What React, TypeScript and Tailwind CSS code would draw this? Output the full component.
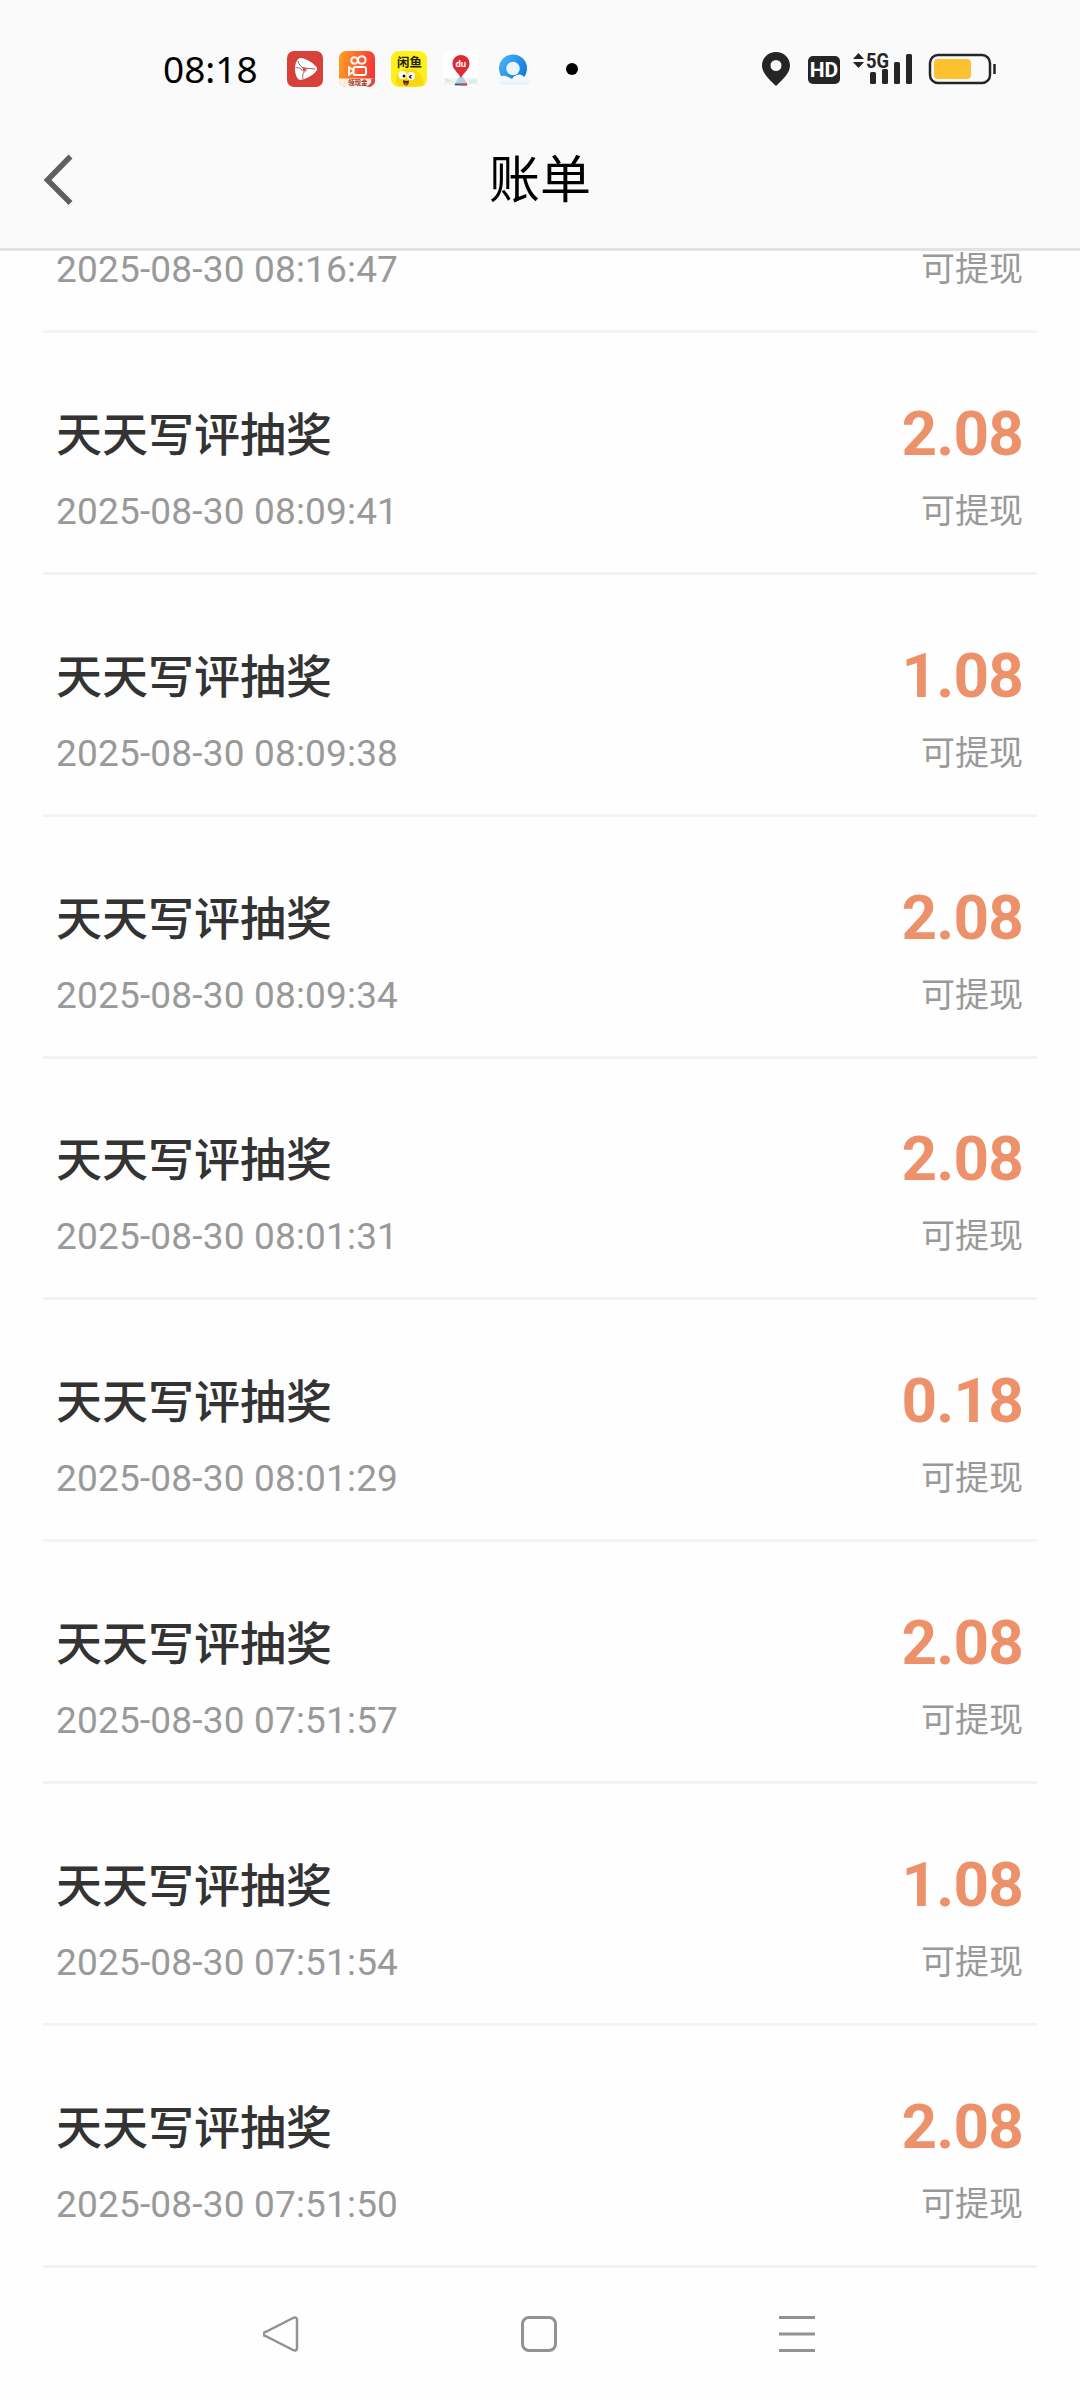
// src/App.tsx
// Bill list screen: status bar, title bar, transaction records and system nav.

import React from "react";

interface BillRecord {
  title: string;
  time: string;
  amount: string;
  status: string;
}

const TITLE = "天天写评抽奖";
const STATUS = "可提现";

const records: BillRecord[] = [
  { title: TITLE, time: "2025-08-30 08:16:47", amount: "2.08", status: STATUS },
  { title: TITLE, time: "2025-08-30 08:09:41", amount: "2.08", status: STATUS },
  { title: TITLE, time: "2025-08-30 08:09:38", amount: "1.08", status: STATUS },
  { title: TITLE, time: "2025-08-30 08:09:34", amount: "2.08", status: STATUS },
  { title: TITLE, time: "2025-08-30 08:01:31", amount: "2.08", status: STATUS },
  { title: TITLE, time: "2025-08-30 08:01:29", amount: "0.18", status: STATUS },
  { title: TITLE, time: "2025-08-30 07:51:57", amount: "2.08", status: STATUS },
  { title: TITLE, time: "2025-08-30 07:51:54", amount: "1.08", status: STATUS },
  { title: TITLE, time: "2025-08-30 07:51:50", amount: "2.08", status: STATUS },
];

const App: React.FC = () => (
  <div className="flex h-[2400px] w-[1080px] flex-col overflow-hidden bg-[#fefefe] font-['Roboto','Noto_Sans_CJK_SC',sans-serif]">
    <header className="h-[251px] shrink-0 border-b-3 border-[#e2e2e2] bg-[#fafafa]">
      <StatusBar />
      <TitleBar />
    </header>

    {/* ── Records, scrolled to the end ── */}
    <main className="flex h-[2017px] shrink-0 flex-col justify-end overflow-hidden px-[43px]">
      {records.map((r) => (
        <BillRow key={r.time} record={r} />
      ))}
    </main>

    <SystemNav />
  </div>
);

// ── Single record ─────────────────────────────────────────────────────────────
const BillRow: React.FC<{ record: BillRecord }> = ({ record }) => (
  <div className="flex h-[241.9px] shrink-0 items-end justify-between border-b-3 border-[#f3f3f3] pr-[14px] pb-[38px] pl-[13px]">
    <div className="flex flex-col">
      <p className="mb-[25px] text-[46px] leading-[60px] font-medium text-[#333]">{record.title}</p>
      <p className="text-[37px] leading-[44px] tracking-[0.18px] text-[#999]">{record.time}</p>
    </div>
    <div className="flex flex-col items-end pb-[1px]">
      <p className="mb-[25px] text-[62px] leading-[60px] font-bold tracking-[-0.8px] text-[#ed916a]">{record.amount}</p>
      <p className="text-[34px] leading-[44px] text-[#999]">{record.status}</p>
    </div>
  </div>
);

// ── Title bar ─────────────────────────────────────────────────────────────────
const TitleBar: React.FC = () => (
  <div className="grid h-[143px] grid-cols-3 items-center">
    <svg className="ml-[41px] h-[54px] w-[36px]" viewBox="0 0 36 54" fill="none" stroke="#5f5f5f" strokeWidth="5.5">
      <path d="M29.5 3.5 6.5 27l23 23" />
    </svg>
    <h1 className="pt-[2px] text-center text-[51px] leading-[60px] text-black">账单</h1>
  </div>
);

// ── Android status bar ────────────────────────────────────────────────────────
const StatusBar: React.FC = () => (
  <div className="flex h-[108px] items-center justify-between pt-[30px] pr-[84px] pl-[163px]">
    <div className="flex items-center">
      <span className="w-[124px] font-['Noto_Sans',sans-serif] text-[37px] leading-[40px] text-black">08:18</span>
      <div className="flex items-center gap-[16px]">
        <PlayAppIcon />
        <CameraAppIcon />
        <FishAppIcon />
        <MapAppIcon />
        <CloudAppIcon />
      </div>
      <span className="ml-[35px] size-[12px] rounded-full bg-black" />
    </div>
    <div className="flex items-center">
      <svg className="h-[36px] w-[30px]" viewBox="0 0 30 36">
        <path
          fill="#252525"
          fillRule="evenodd"
          d="M15 1C7 1 1 7 1 14.5 1 22 8 28 15 35c7-7 14-13 14-20.5C29 7 23 1 15 1Zm0 8a5.500 5.500 0 1 1 0 11 5.500 5.500 0 0 1 0-11Z"
        />
      </svg>
      <span className="mt-[2px] ml-[17px] flex h-[28px] w-[32px] items-center justify-center rounded-[5px] bg-[#252525] text-[21px] leading-[28px] font-bold text-white">
        HD
      </span>
      <SignalIcon />
      <svg className="ml-[15px] h-[32px] w-[68px]" viewBox="0 0 68 32">
        <rect x="2" y="2" width="60" height="28" rx="8" fill="none" stroke="#252525" strokeWidth="2.5" />
        <rect x="6" y="6" width="37" height="20" rx="4" fill="#fbc12f" />
        <path d="M66.5 11v10" stroke="#252525" strokeWidth="2.5" />
      </svg>
    </div>
  </div>
);

const SignalIcon: React.FC = () => (
  <svg className="ml-[13px] h-[38px] w-[60px]" viewBox="0 -2 60 38" fill="#252525">
    <path d="m5.500 1 5.500 6H0zM5.500 16 0 10h11z" />
    <text x="13" y="15.500" fontSize="20" fontWeight="700" textLength="23" lengthAdjust="spacingAndGlyphs">
      5G
    </text>
    <rect x="17" y="20" width="6" height="12" rx="1.5" />
    <rect x="29" y="17" width="6" height="15" rx="1.5" />
    <rect x="41" y="10" width="6" height="22" rx="1.5" />
    <rect x="53" y="2" width="6" height="30" rx="1.5" />
  </svg>
);

// ── Notification icons ────────────────────────────────────────────────────────
const PlayAppIcon: React.FC = () => (
  <svg className="size-[36px]" viewBox="0 0 36 36">
    <rect width="36" height="36" rx="7" fill="#d6423a" />
    <path d="M13 7c4-1 14 5 16.500 9 1 2 .5 3.500-1 5C25 25 17 29 13 29c-3-.5-5-6-5-11s2-10.500 5-11Z" fill="#fff" />
    <path d="M11 10c1 4 3 6 6 7l11 1M20 19c-4 2-5 5-4 9M8.500 17c3-1 5 0 7 3" stroke="#7c3b3a" strokeWidth="0.8" fill="none" />
    <path d="m15.500 16.500 4.500 1-3.500 3.500z" fill="#d6423a" />
  </svg>
);

const CameraAppIcon: React.FC = () => (
  <svg className="size-[36px]" viewBox="0 0 36 36">
    <defs>
      <linearGradient id="cam" x1="0" y1="0.3" x2="1" y2="0.5">
        <stop offset="0" stopColor="#ff9b25" />
        <stop offset="0.5" stopColor="#ff632a" />
        <stop offset="1" stopColor="#f2343a" />
      </linearGradient>
      <clipPath id="camClip">
        <rect width="36" height="36" rx="7" />
      </clipPath>
    </defs>
    <g clipPath="url(#camClip)">
      <rect width="36" height="36" fill="url(#cam)" />
      <g fill="none" stroke="#fff" strokeWidth="2">
        <circle cx="15.500" cy="9.500" r="3.300" />
        <circle cx="22.800" cy="9" r="3.800" />
        <rect x="14.500" y="16" width="12.500" height="8" rx="2" />
        <path d="m14.500 19-4.500-2.500v7l4.500-2.500" />
      </g>
      <path d="M0 27.500h36L28 36H0Z" fill="#fff0df" />
      <path d="M36 27v9h-9c4-1 6-4 5-8Z" fill="#df4941" />
      <text x="9" y="34" fontSize="6.5" fontWeight="700" fill="#98352c">
        领现金
      </text>
    </g>
  </svg>
);

const FishAppIcon: React.FC = () => (
  <svg className="size-[36px]" viewBox="0 0 36 36">
    <rect width="36" height="36" rx="8" fill="#fff01b" />
    <text x="6" y="16" fontSize="12.5" fontWeight="700" fill="#242300">
      闲鱼
    </text>
    <path d="M5 31c-1-9 6-13 14-13 6 0 11 4 13 10l1 6c-8 2-20 2-27 0Z" fill="#f8d713" />
    <circle cx="11.500" cy="24" r="4" fill="#fff" />
    <circle cx="20" cy="25" r="4" fill="#fff" />
    <circle cx="13" cy="25" r="1.500" fill="#211b08" />
    <path d="m20.500 24-2 2 2 1.500" stroke="#211b08" strokeWidth="1.300" fill="none" />
    <path d="M12 29c2 1 4 1 6 .5 0 3-1 5-3 5s-3-2.500-3-5.500Z" fill="#58220d" />
    <path d="M13.500 32.500c1-1 2-1 3 0-.5 2-2.500 2-3 0Z" fill="#e74b30" />
  </svg>
);

const MapAppIcon: React.FC = () => (
  <svg className="size-[36px]" viewBox="0 0 36 36">
    <rect width="36" height="36" rx="7" fill="#fff" />
    <path d="M1 27h34v7H1Z" fill="#f1f5ec" />
    <path d="m1 27 12 4H3Zm25 2 8-1v3l-8 2Z" fill="#d8eee3" />
    <path d="m16 26-5 8h14l-5-8Z" fill="#b2d2e6" />
    <path d="M12 32.500h12v2H12Z" fill="#4b5c8b" />
    <path d="M18 32.500h6v2h-6Z" fill="#db4c4e" />
    <path d="M18 4c-5 0-8.500 4-8.500 8.500 0 6 5 8 8.500 14.500 3.500-6.500 8.500-8.500 8.500-14.500C26.500 8 23 4 18 4Z" fill="#df2933" />
    <text x="12.5" y="16" fontSize="9.500" fontWeight="700" fill="#fff">
      du
    </text>
  </svg>
);

const CloudAppIcon: React.FC = () => (
  <svg className="size-[36px]" viewBox="0 0 36 36">
    <defs>
      <linearGradient id="ring" x1="0" y1="0" x2="1" y2="0.6">
        <stop offset="0" stopColor="#4db7f4" />
        <stop offset="1" stopColor="#137cdd" />
      </linearGradient>
      <linearGradient id="cloud" x1="0" y1="0" x2="0" y2="1">
        <stop offset="0" stopColor="#fff" />
        <stop offset="1" stopColor="#e3f1fb" />
      </linearGradient>
    </defs>
    <circle cx="18" cy="17.500" r="14" fill="url(#ring)" />
    <circle cx="18" cy="17.500" r="6.800" fill="#e9f4fc" />
    <path d="M4 28c1-4 6-4 9-2l4 2c3-5 9-6 12-2 3 0 6 2 6 5 0 2-1 3-3 3H9c-4 0-6-3-5-6Z" fill="url(#cloud)" />
  </svg>
);

// ── Bottom system navigation ──────────────────────────────────────────────────
const SystemNav: React.FC = () => (
  <nav className="flex grow items-center justify-between pr-[265px] pl-[263px]">
    <svg className="size-[36px]" viewBox="0 0 36 36" fill="none" stroke="#929292" strokeWidth="2.5">
      <path d="M30 2 2.500 16a2 2 0 0 0 0 4L30 34c2 1.200 4 .5 4-1.500v-29c0-2-2-2.700-4-1.500Z" />
    </svg>
    <span className="mr-px size-[36px] rounded-[8px] border-3 border-[#929292]" />
    <svg className="size-[36px]" viewBox="0 0 36 36" stroke="#929292" strokeWidth="3">
      <path d="M0 1.500h36M0 18h36M0 34.500h36" />
    </svg>
  </nav>
);

export default App;
